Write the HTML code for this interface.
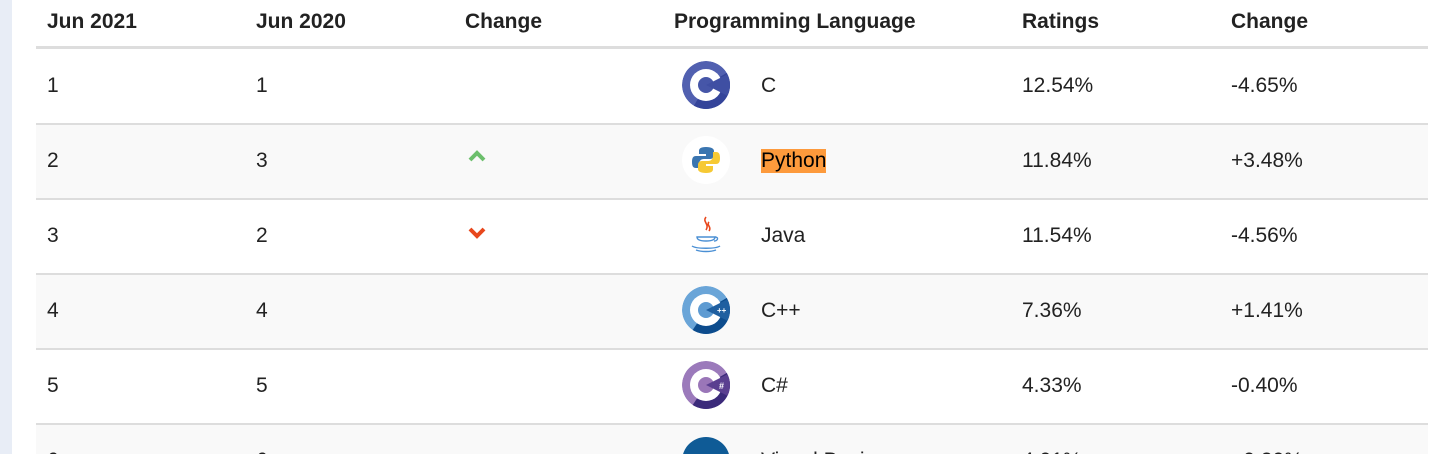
<!DOCTYPE html>
<html><head><style>
html,body{margin:0;width:1435px;height:454px;overflow:hidden}
body{background:#fff;font-family:"Liberation Sans",sans-serif;color:#222;font-size:21px;position:relative}
.strip{position:absolute;left:0;top:0;width:12px;height:454px;background:#e8edf6}
.t{position:absolute;white-space:nowrap;line-height:24px}
.h{font-weight:bold;top:10px}
.row{position:absolute;left:36px;width:1392px;height:73px}
.b{position:absolute;left:36px;width:1392px;height:2px;background:#ddd}
svg{position:absolute}
</style></head><body>
<svg width="0" height="0" style="position:absolute"><defs><clipPath id="cc"><circle cx="24" cy="24" r="24"/></clipPath></defs></svg>
<div class="strip"></div>
<div class="t h" style="left:47px">Jun 2021</div>
<div class="t h" style="left:256px">Jun 2020</div>
<div class="t h" style="left:465px">Change</div>
<div class="t h" style="left:674px">Programming Language</div>
<div class="t h" style="left:1022px">Ratings</div>
<div class="t h" style="left:1231px">Change</div>
<div class="b" style="top:46px;height:3px"></div>

<div class="row" style="top:125px;background:#f9f9f9"></div>
<div class="row" style="top:275px;background:#f9f9f9"></div>
<div class="row" style="top:425px;background:#f9f9f9;height:29px"></div>
<div class="b" style="top:123px"></div>
<div class="b" style="top:198px"></div>
<div class="b" style="top:273px"></div>
<div class="b" style="top:348px"></div>
<div class="b" style="top:423px"></div>

<div class="t" style="left:47px;top:74px">1</div><div class="t" style="left:256px;top:74px">1</div><div class="t" style="left:761px;top:74px">C</div><div class="t" style="left:1022px;top:74px">12.54%</div><div class="t" style="left:1231px;top:74px">-4.65%</div>
<div class="t" style="left:47px;top:149px">2</div><div class="t" style="left:256px;top:149px">3</div><div class="t" style="left:761px;top:149px;background:#fd9a3c;color:#000">Python</div><div class="t" style="left:1022px;top:149px">11.84%</div><div class="t" style="left:1231px;top:149px">+3.48%</div>
<div class="t" style="left:47px;top:224px">3</div><div class="t" style="left:256px;top:224px">2</div><div class="t" style="left:761px;top:224px">Java</div><div class="t" style="left:1022px;top:224px">11.54%</div><div class="t" style="left:1231px;top:224px">-4.56%</div>
<div class="t" style="left:47px;top:299px">4</div><div class="t" style="left:256px;top:299px">4</div><div class="t" style="left:761px;top:299px">C++</div><div class="t" style="left:1022px;top:299px">7.36%</div><div class="t" style="left:1231px;top:299px">+1.41%</div>
<div class="t" style="left:47px;top:374px">5</div><div class="t" style="left:256px;top:374px">5</div><div class="t" style="left:761px;top:374px">C#</div><div class="t" style="left:1022px;top:374px">4.33%</div><div class="t" style="left:1231px;top:374px">-0.40%</div>
<div class="t" style="left:47px;top:449px">6</div><div class="t" style="left:256px;top:449px">6</div><div class="t" style="left:761px;top:449px">Visual Basic</div><div class="t" style="left:1022px;top:449px">4.01%</div><div class="t" style="left:1231px;top:449px">+0.20%</div>

<svg style="left:467px;top:149px" width="20" height="14"><path d="M3 11 L10 4 L17 11" stroke="#6cbf6c" stroke-width="4" fill="none"/></svg>
<svg style="left:467px;top:226px" width="20" height="14"><path d="M3 3 L10 10 L17 3" stroke="#e8471c" stroke-width="4" fill="none"/></svg>

<svg style="left:682px;top:61px" width="48" height="48" viewBox="0 0 48 48"><g clip-path="url(#cc)"><circle cx="24" cy="24" r="24" fill="#5160b0"/><path d="M24 24 L48 10 L48 48 L10 48Z" fill="#34449a"/><circle cx="24" cy="24" r="16" fill="#fff"/><circle cx="24" cy="24" r="8" fill="#4656a8"/><path d="M24 24 L48 12 L48 36Z" fill="#3f4fa3"/></g></svg>
<svg style="left:682px;top:136px" width="48" height="48" viewBox="0 0 48 48"><circle cx="24" cy="24" r="24" fill="#fff"/><path d="M24 11c-6 0-7 2-7 4v3h7v2H14c-3 0-4 2-4 6s1 6 4 6h3v-4c0-3 2-5 5-5h6c3 0 4-2 4-4v-4c0-2-2-4-8-4z" fill="#3a75b0"/><path d="M24 37c6 0 7-2 7-4v-3h-7v-2h10c3 0 4-2 4-6s-1-6-4-6h-3v4c0 3-2 5-5 5h-6c-3 0-4 2-4 4v4c0 2 2 4 8 4z" fill="#f6c934"/></svg>
<svg style="left:682px;top:211px" width="48" height="48" viewBox="0 0 48 48"><path d="M24 6c-4 5 4 7 0 13M27 11c-3 3 3 5 0 9" stroke="#e8471c" stroke-width="1.6" fill="none"/><path d="M15 26h18c0 3-4 4-9 4s-9-1-9-4zM10 35c4 3 24 3 28 0M14 39c5 2 15 2 20 0" stroke="#4a8fd4" stroke-width="1.4" fill="none"/><path d="M33 26c4 0 3 4-1 4" stroke="#4a8fd4" stroke-width="1.4" fill="none"/></svg>
<svg style="left:682px;top:286px" width="48" height="48" viewBox="0 0 48 48"><g clip-path="url(#cc)"><circle cx="24" cy="24" r="24" fill="#6aa5d8"/><path d="M24 24 L48 10 L48 48 L8 48Z" fill="#0d4c8d"/><circle cx="24" cy="24" r="16" fill="#fff"/><circle cx="24" cy="24" r="8" fill="#5e9bd2"/><path d="M24 24 L48 12 L48 36Z" fill="#1f5fa0"/></g><text x="35" y="27" font-size="8" font-weight="bold" fill="#fff" font-family="Liberation Sans">++</text></svg>
<svg style="left:682px;top:361px" width="48" height="48" viewBox="0 0 48 48"><g clip-path="url(#cc)"><circle cx="24" cy="24" r="24" fill="#9b7abb"/><path d="M24 24 L48 10 L48 48 L8 48Z" fill="#3b2a7a"/><circle cx="24" cy="24" r="16" fill="#fff"/><circle cx="24" cy="24" r="8" fill="#9a76b8"/><path d="M24 24 L48 12 L48 36Z" fill="#5a3f90"/></g><text x="37" y="28" font-size="9" font-weight="bold" fill="#fff" font-family="Liberation Sans">#</text></svg>
<svg style="left:682px;top:437px" width="48" height="48" viewBox="0 0 48 48"><circle cx="24" cy="24" r="24" fill="#0f5b96"/><text x="8" y="30" font-size="18" font-weight="bold" fill="#fff" font-family="Liberation Sans">VB</text></svg>
</body></html>
